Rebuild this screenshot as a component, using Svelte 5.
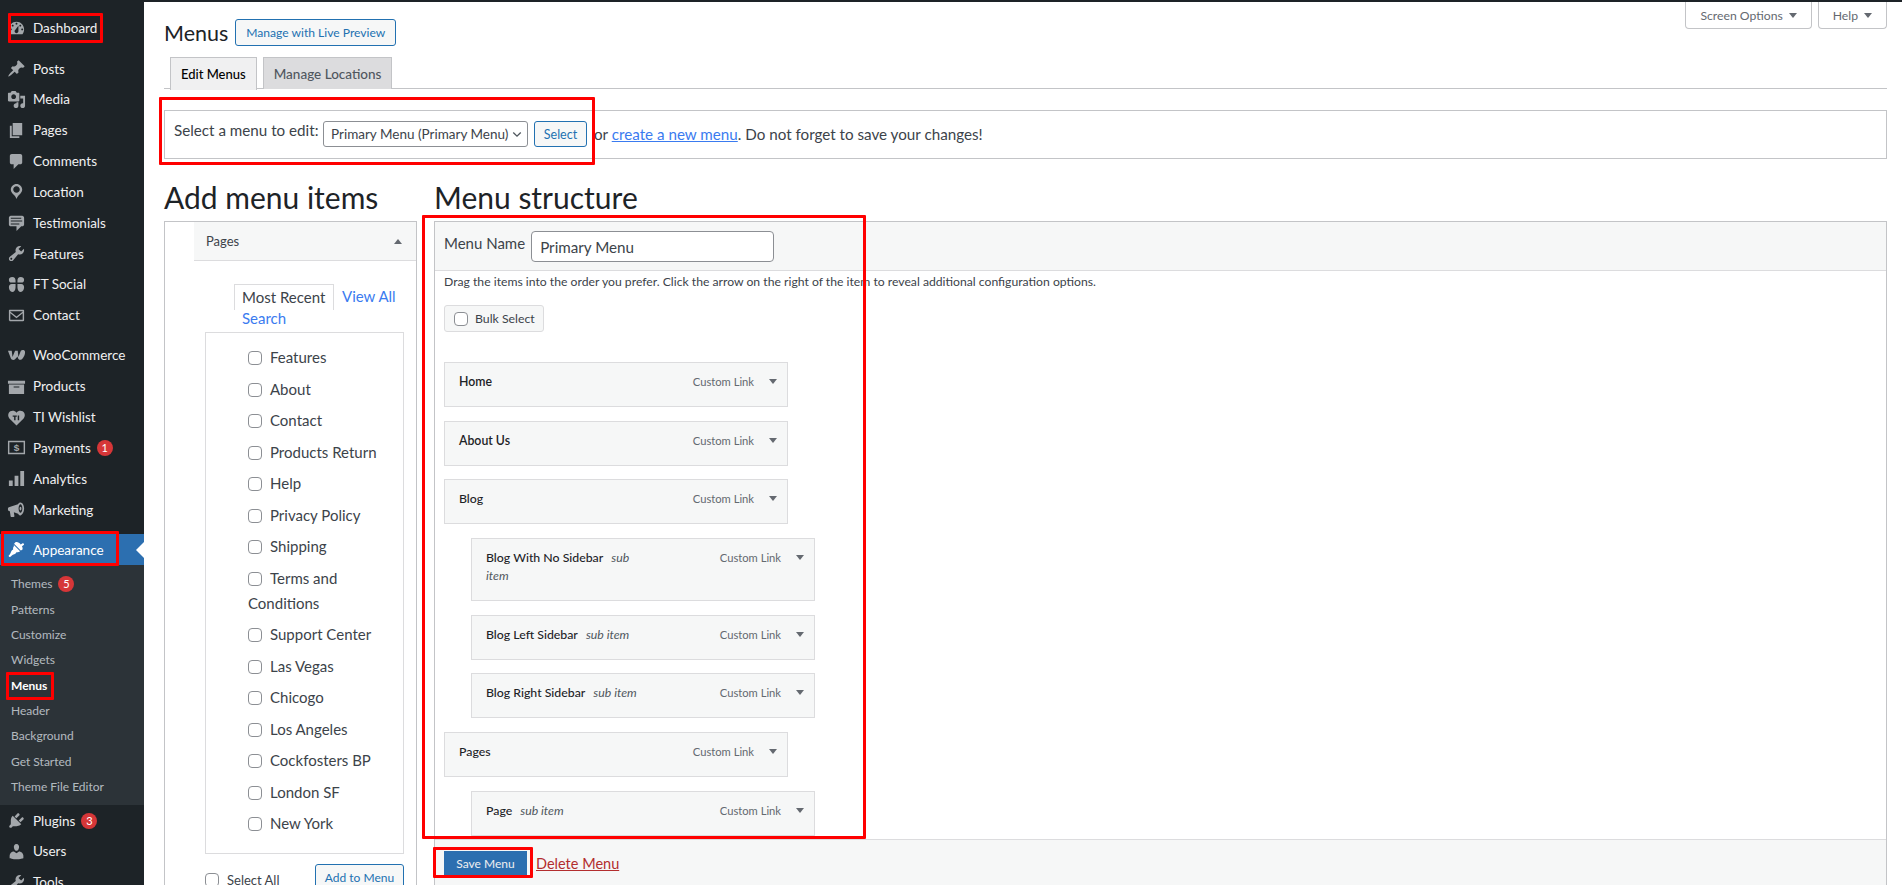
<script lang="ts">
  const icons: Record<string, string> = {
    dashboard: 'M3.76 16h12.48c1.1-1.37 1.76-3.11 1.76-5 0-4.42-3.58-8-8-8s-8 3.58-8 8c0 1.89.66 3.63 1.76 5zM10 4c.55 0 1 .45 1 1s-.45 1-1 1-1-.45-1-1 .45-1 1-1zM6 6c.55 0 1 .45 1 1s-.45 1-1 1-1-.45-1-1 .45-1 1-1zm8 0c.55 0 1 .45 1 1s-.45 1-1 1-1-.45-1-1 .45-1 1-1zm-5.37 5.55L12 7v6c0 1.1-.9 2-2 2s-2-.9-2-2c0-.57.24-1.08.63-1.45zM4 10c.55 0 1 .45 1 1s-.45 1-1 1-1-.45-1-1 .45-1 1-1zm12 0c.55 0 1 .45 1 1s-.45 1-1 1-1-.45-1-1 .45-1 1-1z',
    post: 'M10.44 3.02l1.82-1.82 6.36 6.35-1.83 1.82c-1.05-.68-2.48-.57-3.41.36l-.75.75c-.92.93-1.04 2.35-.35 3.41l-1.83 1.82-2.41-2.41-2.8 2.79c-.42.42-3.38 2.71-3.8 2.29s1.86-3.39 2.28-3.81l2.79-2.79L4.1 9.36l1.83-1.82c1.05.69 2.48.57 3.4-.36l.75-.75c.93-.92 1.05-2.35.36-3.41z',
    media: 'M13 11V4c0-.55-.45-1-1-1h-1.67L9 1H5L3.67 3H2c-.55 0-1 .45-1 1v7c0 .55.45 1 1 1h10c.55 0 1-.45 1-1zM7 4.5c1.38 0 2.5 1.12 2.5 2.5S8.38 9.5 7 9.5 4.5 8.38 4.5 7 5.62 4.5 7 4.5zM14 6h5v10.5c0 1.38-1.12 2.5-2.5 2.5S14 17.88 14 16.5s1.12-2.5 2.5-2.5c.17 0 .34.02.5.05V9h-3V6zm-4 8.05V13h2v3.5c0 1.38-1.12 2.5-2.5 2.5S7 17.88 7 16.5 8.12 14 9.5 14c.17 0 .34.02.5.05z',
    page: 'M6 15V2h10v13H6zm-1 1h8v2H3V5h2v11z',
    comments: 'M5 2h9c1.1 0 2 .9 2 2v7c0 1.1-.9 2-2 2h-2l-5 5v-5H5c-1.1 0-2-.9-2-2V4c0-1.1.9-2 2-2z',
    location: 'M10 2c-3.31 0-6 2.69-6 6 0 2.02 1.17 3.71 2.53 4.89.43.37 1.18.96 1.85 1.83.74.97 1.2 2.05 1.62 3.28.42-1.23.88-2.31 1.62-3.28.67-.87 1.42-1.46 1.85-1.83C14.830 11.71 16 10.02 16 8c0-3.31-2.69-6-6-6zm0 2.56c1.9 0 3.44 1.54 3.44 3.44S11.9 11.44 10 11.44 6.56 9.9 6.56 8 8.1 4.56 10 4.56z',
    testimonial: 'M4 3h12c.55 0 1.02.2 1.41.59S18 4.45 18 5v7c0 .55-.2 1.02-.59 1.41S16.55 14 16 14h-1l-5 5v-5H4c-.55 0-1.02-.2-1.41-.59S2 12.55 2 12V5c0-.55.2-1.02.59-1.41S3.45 3 4 3zm11 2H4v1h11V5zm1 3H4v1h12V8zm-3 3H4v1h9v-1z',
    tools: 'M16.68 9.77c-1.34 1.34-3.3 1.67-4.95.99l-5.41 6.52c-.99.99-2.59.99-3.58 0s-.99-2.59 0-3.57l6.52-5.42c-.68-1.65-.35-3.61.99-4.95 1.28-1.28 3.12-1.62 4.72-1.06l-2.89 2.89 2.82 2.82 2.86-2.87c.53 1.58.18 3.39-1.08 4.65zM3.81 16.21c.4.39 1.04.39 1.43 0 .4-.4.4-1.04 0-1.43-.39-.4-1.03-.4-1.43 0-.39.39-.39 1.03 0 1.43z',
    social: 'M2 5c0-2 1.500-3 3.500-3 2.500 0 3.500 1.500 3.500 4v2H5C3 8 2 7 2 5zM18 5c0-2-1.500-3-3.500-3C12 2 11 3.500 11 6v2h4c2 0 3-1 3-3zM2 13c0-2 1-3.500 3-3.500h4V13c0 3-1.500 5-3.500 5S2 15.500 2 13zM18 13c0-2-1-3.500-3-3.500h-4V13c0 3 1.500 5 3.500 5s3.500-2.500 3.500-5z',
    email: 'M3 4h14c.55 0 1 .45 1 1v10c0 .55-.45 1-1 1H3c-.55 0-1-.45-1-1V5c0-.55.45-1 1-1zm.6 2l6.400 5 6.400-5v-.4H3.600V6zm-.1 1.700v6.700h13V7.700L10 12.800 3.500 7.700z',
    woo: 'M1 5h4l.800 6.500L8.500 5h2.800l.700 6.500L14.600 5c1-1 4.400-1.200 4.400 1.500 0 3-2.400 8-5 8-1.600 0-2.500-1-2.900-3.500L8.500 14c-.9 1-3.700 1.300-4.500-1L1 5z',
    archive: 'M19 4v3H1V4h18zM2 8h16v10H2V8zm5 2v1h6v-1H7z',
    wishlist: 'M10 18.500 2.500 11C1 9.300 1 6.800 1.800 5.300 3.300 2.400 7.800 2 10 5c2.200-3 6.700-2.600 8.200.3.800 1.500.8 4-.7 5.700L10 18.500zM6 8v1.300h1.500V13H9V9.300h1.300V8H6zm5.300 0v5h1.500V8h-1.500z',
    payments: 'M1 3h18v14H1V3zm1.500 1.500v11h15v-11h-15z',
    analytics: 'M18 18V2h-4v16h4zm-6 0V7H8v11h4zm-6 0v-6H2v6h4z',
    marketing: 'M18 9c0-3.500-1.700-6.500-3.800-6.500-1 0-2 .7-2.700 1.900L2 7.500c-.7.2-1 .7-1 1.300v1.400c0 .6.4 1.100 1 1.300l1 .3.800 5.200c.1.600.5 1 1.100 1h2c.6 0 1-.5.900-1.100l-.6-3.900 4.400 1.400c.7 1.200 1.600 1.900 2.600 1.900C16.300 15.500 18 12.500 18 9zm-3.800 4.500c-.9 0-2-1.800-2-4.500s1.100-4.500 2-4.500 2 1.800 2 4.500-1.100 4.500-2 4.500zm0-6.500c-.6 0-1 .9-1 2s.4 2 1 2 1-.9 1-2-.4-2-1-2z',
    appearance: 'M14.480 11.060L7.410 3.990l1.500-1.500c.5-.56 2.300-.47 3.590.32 1.210.74 1.760 1.600 1.900 1.800l2.100-1.200c.4-.25 1.100.15 1.300.55.250.4.150 1-.25 1.300l-1.800 1.200c.5 1.100.9 2.300.6 3.400-.2.900-1.060 1.060-1.870 1.200zM6.700 4.700l7.070 7.070c-1.200 1.100-2.800 1.300-3.800 1.100-.4.900-1.200 1.700-2.300 2.200-1 .4-2.100.7-2.900 1.400-.6.5-1.200 1.300-1.900 1.400-.6.100-1.100-.3-1.200-.9 0-.6.700-1.200 1.200-1.800.7-.8 1-1.900 1.400-2.900.5-1.100 1.300-1.900 2.200-2.300-.2-1-.1-2.800 1.030-3.770z',
    plugins: 'M13.11 4.360L9.870 7.600 8 5.730l3.240-3.240c.35-.34 1.050-.2 1.560.32.52.51.66 1.210.31 1.550zm-8 1.770l.91-1.120 9.010 9.010-1.190.84c-.71.71-2.630 1.160-3.820 1.160H6.140L4.900 17.260c-.59.59-1.540.59-2.120 0-.59-.58-.59-1.530 0-2.120l1.240-1.240v-3.880c0-1.130.4-3.190 1.090-3.890zm7.260 3.970l3.240-3.240c.34-.35 1.040-.21 1.550.31.52.51.66 1.210.31 1.550l-3.240 3.250z',
    users: 'M10 9.250c-2.270 0-2.730-3.440-2.730-3.440C7 4.020 7.820 2 9.970 2c2.160 0 2.980 2.020 2.710 3.810 0 0-.41 3.440-2.680 3.440zm0 2.570L12.720 10c2.390 0 4.520 2.330 4.520 4.530v2.490s-3.650 1.130-7.240 1.130c-3.650 0-7.240-1.130-7.240-1.130v-2.490c0-2.250 1.940-4.480 4.470-4.480z'
  };

  const groupA = [
    { label: 'Posts', icon: 'post' },
    { label: 'Media', icon: 'media' },
    { label: 'Pages', icon: 'page' },
    { label: 'Comments', icon: 'comments' },
    { label: 'Location', icon: 'location' },
    { label: 'Testimonials', icon: 'testimonial' },
    { label: 'Features', icon: 'tools' },
    { label: 'FT Social', icon: 'social' },
    { label: 'Contact', icon: 'email' }
  ];
  const groupB = [
    { label: 'WooCommerce', icon: 'woo' },
    { label: 'Products', icon: 'archive' },
    { label: 'TI Wishlist', icon: 'wishlist' },
    { label: 'Payments', icon: 'payments', badge: 1 },
    { label: 'Analytics', icon: 'analytics' },
    { label: 'Marketing', icon: 'marketing' }
  ];
  const subNav = [
    { label: 'Themes', badge: 5 },
    { label: 'Patterns' },
    { label: 'Customize' },
    { label: 'Widgets' },
    { label: 'Menus', current: true },
    { label: 'Header' },
    { label: 'Background' },
    { label: 'Get Started' },
    { label: 'Theme File Editor' }
  ];
  const groupC = [
    { label: 'Plugins', icon: 'plugins', badge: 3 },
    { label: 'Users', icon: 'users' },
    { label: 'Tools', icon: 'tools' }
  ];

  const pages = [
    'Features', 'About', 'Contact', 'Products Return', 'Help', 'Privacy Policy', 'Shipping',
    'Terms and Conditions', 'Support Center', 'Las Vegas', 'Chicogo', 'Los Angeles',
    'Cockfosters BP', 'London SF', 'New York'
  ];

  const menuItems = [
    { title: 'Home', strong: true },
    { title: 'About Us', strong: true },
    { title: 'Blog' },
    { title: 'Blog With No Sidebar', sub: true, tall: true },
    { title: 'Blog Left Sidebar', sub: true },
    { title: 'Blog Right Sidebar', sub: true },
    { title: 'Pages' },
    { title: 'Page', sub: true }
  ];
</script>

{#snippet navItem(item)}
  <li class="nav-item">
    <svg class="nav-icon" viewBox="0 0 20 20" fill="currentColor" fill-rule="evenodd" aria-hidden="true">
      <path d={icons[item.icon]} />
      {#if item.icon === 'payments'}
        <text x="10" y="14" text-anchor="middle" font-size="10.5" font-weight="700" font-family="Liberation Sans, sans-serif">$</text>
      {/if}
    </svg>
    <span>{item.label}</span>
    {#if item.badge}<b class="badge">{item.badge}</b>{/if}
  </li>
{/snippet}

<div class="shell">
  <nav class="sidebar">
    <ul class="nav-list">
      {@render navItem({ label: 'Dashboard', icon: 'dashboard' })}
    </ul>
    <ul class="nav-list gap-a">
      {#each groupA as item}
        {@render navItem(item)}
      {/each}
    </ul>
    <ul class="nav-list gap-b">
      {#each groupB as item}
        {@render navItem(item)}
      {/each}
    </ul>
    <ul class="nav-list gap-c">
      <li class="nav-item active">
        <svg class="nav-icon" viewBox="0 0 20 20" fill="currentColor" fill-rule="evenodd" aria-hidden="true">
          <path d={icons.appearance} />
        </svg>
        <span>Appearance</span>
      </li>
    </ul>
    <ul class="sub-list">
      {#each subNav as sub}
        <li class:current={sub.current}>
          {sub.label}
          {#if sub.badge}<b class="badge">{sub.badge}</b>{/if}
        </li>
      {/each}
    </ul>
    <ul class="nav-list">
      {#each groupC as item}
        {@render navItem(item)}
      {/each}
    </ul>
  </nav>

  <main class="main">
    <header class="head">
      <div class="title-row">
        <h1>Menus</h1>
        <button class="btn">Manage with Live Preview</button>
      </div>
      <div class="meta-links">
        <button class="meta-link">Screen Options <i class="caret"></i></button>
        <button class="meta-link">Help <i class="caret"></i></button>
      </div>
    </header>

    <div class="tabs">
      <span class="tab active">Edit Menus</span>
      <span class="tab">Manage Locations</span>
    </div>

    <div class="manage-bar">
      <span class="manage-label">Select a menu to edit:</span>
      <div class="select-wrap">
        <select>
          <option>Primary Menu (Primary Menu)</option>
        </select>
        <svg class="chevron" viewBox="0 0 12 8" aria-hidden="true">
          <path d="M1.500 1.500 6 6l4.500-4.500" fill="none" stroke="currentColor" stroke-width="1.600" />
        </svg>
      </div>
      <button class="btn">Select</button>
      <span class="manage-hint">or <a href="#new" class="link">create a new menu</a>. Do not forget to save your changes!</span>
    </div>

    <div class="columns">
      <section class="col-left">
        <h2>Add menu items</h2>
        <div class="left-box">
          <div class="accordion-head">
            <span>Pages</span>
            <i class="caret up"></i>
          </div>
          <div class="accordion-body">
            <div class="pick-tabs">
              <span class="pick-tab">Most Recent</span>
              <a href="#all" class="link plain">View All</a>
              <a href="#search" class="link plain search">Search</a>
            </div>
            <ul class="page-list">
              {#each pages as page}
                <li><input type="checkbox" class="check" /><label for="">{page}</label></li>
              {/each}
            </ul>
            <div class="pick-foot">
              <label class="select-all" for=""><input type="checkbox" class="check" />Select All</label>
              <button class="btn add">Add to Menu</button>
            </div>
          </div>
        </div>
      </section>

      <section class="col-right">
        <h2>Menu structure</h2>
        <div class="right-box">
          <div class="name-bar">
            <span class="name-label">Menu Name</span>
            <input class="name-input" type="text" value="Primary Menu" />
          </div>
          <div class="structure">
            <p class="drag-hint">Drag the items into the order you prefer. Click the arrow on the right of the item to reveal additional configuration options.</p>
            <div class="bulk"><input type="checkbox" class="check" />Bulk Select</div>
            {#each menuItems as item}
              <div class="menu-item" class:nested={item.sub} class:tall={item.tall}>
                <div class="item-title" class:strong={item.strong}>
                  {item.title}{#if item.sub}<em>sub item</em>{/if}
                </div>
                <span class="item-type">Custom Link</span>
                <i class="caret"></i>
              </div>
            {/each}
          </div>
          <div class="save-bar">
            <button class="btn primary">Save Menu</button>
            <a href="#delete" class="delete">Delete Menu</a>
          </div>
        </div>
      </section>
    </div>
  </main>

  <!-- red annotation boxes drawn over the screenshot -->
  <div class="mark" style="left:8px;top:13px;width:95px;height:30px"></div>
  <div class="mark" style="left:1px;top:531px;width:118px;height:35px"></div>
  <div class="mark" style="left:6px;top:672px;width:48px;height:28px"></div>
  <div class="mark" style="left:159px;top:97px;width:436px;height:68px"></div>
  <div class="mark" style="left:422px;top:215px;width:444px;height:624px"></div>
  <div class="mark" style="left:433px;top:847px;width:100px;height:31px"></div>
</div>

<style>
  :global(body) {
    margin: 0;
    background: #fff;
    font-family: Lato, "Open Sans", sans-serif;
    color: #3c434a;
  }

  ul {
    list-style: none;
    margin: 0;
    padding: 0;
  }

  .shell {
    position: relative;
    display: flex;
    width: 1902px;
    height: 885px;
    overflow: hidden;
  }

  .sidebar {
    flex: none;
    width: 144px;
    padding-top: 13px;
    background: #1d2327;
    color: #f0f0f1;
    box-sizing: border-box;
  }

  .nav-list.gap-a {
    margin-top: 9.3px;
  }

  .nav-list.gap-b {
    margin-top: 9.3px;
  }

  .nav-list.gap-c {
    margin-top: 9.2px;
  }

  .nav-item {
    position: relative;
    display: flex;
    align-items: center;
    height: 30.85px;
    padding-left: 7px;
    font-size: 13.5px;
  }

  .nav-item.active {
    background: #2c6fb0;
    color: #fff;
  }

  .nav-item.active .nav-icon {
    color: #fff;
  }

  .nav-item.active::after {
    content: "";
    position: absolute;
    right: 0;
    top: 50%;
    margin-top: -8px;
    border: 8px solid transparent;
    border-right-color: #fff;
    border-left-width: 0;
  }

  .nav-icon {
    flex: none;
    width: 19px;
    height: 19px;
    margin-right: 7px;
    color: #a3a7ab;
  }

  .badge {
    display: inline-block;
    min-width: 16px;
    height: 16px;
    margin-left: 6px;
    border-radius: 50%;
    background: #d63638;
    color: #fff;
    font-size: 11px;
    font-weight: 400;
    line-height: 16px;
    text-align: center;
  }

  .sub-list {
    padding: 6.2px 0 6.2px;
    background: #2c3338;
    color: rgba(240, 246, 252, 0.7);
    font-size: 12px;
  }

  .sub-list li {
    display: flex;
    align-items: center;
    height: 25.3px;
    padding-left: 11px;
  }

  .sub-list li.current {
    color: #fff;
    font-weight: 700;
  }

  .main {
    flex: 1;
    min-width: 0;
    padding: 0 15px 0 20px;
    border-top: 2px solid #1d2327;
  }

  .head {
    display: flex;
    justify-content: space-between;
    height: 55px;
  }

  .title-row {
    display: flex;
    align-items: center;
    gap: 7px;
    height: 27px;
    margin-top: 17px;
  }

  h1 {
    margin: 0;
    font-size: 21.5px;
    font-weight: 400;
    color: #1d2327;
  }

  .btn {
    height: 27px;
    padding: 0 10px;
    border: 1px solid #2271b1;
    border-radius: 3px;
    background: #f6f7f7;
    color: #2271b1;
    font: inherit;
    font-size: 12.1px;
  }

  .btn.primary {
    width: 83px;
    height: 26px;
    padding: 0;
    border-radius: 0;
    border-color: #2c6fb0;
    background: #2c6fb0;
    color: #f0f0f1;
    font-size: 12px;
  }

  .meta-links {
    display: flex;
    gap: 6px;
    align-items: flex-start;
  }

  .meta-link {
    display: flex;
    align-items: center;
    justify-content: center;
    gap: 6px;
    height: 27px;
    padding: 0 14px;
    border: 1px solid #c3c4c7;
    border-top: 0;
    border-radius: 0 0 4px 4px;
    background: #fff;
    color: #646970;
    font: inherit;
    font-size: 12.2px;
  }

  .caret {
    display: inline-block;
    width: 0;
    height: 0;
    border: 4px solid transparent;
    border-top: 5px solid #646970;
    border-bottom: 0;
  }

  .caret.up {
    border-top: 0;
    border-bottom: 5px solid #646970;
  }

  .tabs {
    display: flex;
    gap: 6px;
    height: 31px;
    padding-left: 6px;
    border-bottom: 1px solid #c3c4c7;
  }

  .tab {
    display: flex;
    align-items: center;
    height: 31px;
    padding: 0 10px;
    border: 1px solid #c3c4c7;
    border-bottom: 0;
    background: #dcdcde;
    color: #50575e;
    font-size: 13.5px;
    font-weight: 500;
  }

  .tab.active {
    height: 32px;
    background: #f0f0f1;
    color: #000;
    font-size: 13px;
  }

  .manage-bar {
    display: flex;
    align-items: flex-start;
    box-sizing: border-box;
    height: 49px;
    margin-top: 21px;
    padding: 10px 9px 0;
    border: 1px solid #c3c4c7;
    font-size: 15.2px;
  }

  .manage-label {
    width: 149px;
    flex: none;
    line-height: 18px;
  }

  .select-wrap {
    position: relative;
    height: 26px;
  }

  select {
    appearance: none;
    width: 205px;
    height: 26px;
    padding: 0 18px 0 7px;
    border: 1px solid #8c8f94;
    border-radius: 3px;
    background: #fff;
    color: #3c434a;
    font: inherit;
    font-size: 13.5px;
  }

  .chevron {
    position: absolute;
    right: 6px;
    top: 10px;
    width: 10px;
    height: 7px;
    color: #50575e;
    pointer-events: none;
  }

  .manage-bar .btn {
    width: 53px;
    height: 26px;
    margin-left: 6px;
    padding: 0;
    font-size: 12.5px;
  }

  .manage-hint {
    margin-left: 7px;
    line-height: 26px;
  }

  .link {
    color: #3a7bf0;
  }

  .link.plain {
    text-decoration: none;
  }

  .columns {
    display: flex;
    gap: 17px;
    margin-top: 17px;
  }

  h2 {
    height: 45px;
    margin: 0;
    font-size: 30px;
    font-weight: 400;
    line-height: 43px;
    color: #1d2327;
  }

  .col-left {
    flex: none;
    width: 253px;
  }

  .col-right {
    flex: 1;
    min-width: 0;
  }

  .left-box {
    box-sizing: border-box;
    height: 700px;
    padding-left: 29px;
    border: 1px solid #c3c4c7;
  }

  .accordion-head {
    display: flex;
    align-items: center;
    justify-content: space-between;
    height: 38px;
    padding: 0 14px 0 12px;
    border-bottom: 1px solid #dcdcde;
    background: #f6f7f7;
    font-size: 13px;
  }

  .accordion-body {
    padding: 23px 12px 0 11px;
    font-size: 15px;
  }

  .pick-tabs {
    display: flex;
    flex-wrap: wrap;
    align-items: flex-start;
    height: 48px;
    padding-left: 29px;
    box-sizing: border-box;
  }

  .pick-tab {
    box-sizing: border-box;
    width: 100px;
    height: 26px;
    padding: 3px 7px 0;
    border: 1px solid #dcdcde;
    border-bottom: 0;
  }

  .pick-tabs .plain {
    padding: 3px 0 0 8px;
  }

  .pick-tabs .search {
    flex-basis: 100%;
    padding: 0 0 0 8px;
    height: 22px;
    line-height: 16px;
  }

  .page-list {
    box-sizing: border-box;
    height: 522px;
    padding: 12px 12px 0 42px;
    border: 1px solid #dcdcde;
  }

  .page-list li {
    padding-bottom: 6.5px;
    line-height: 25px;
  }

  .check {
    appearance: none;
    box-sizing: border-box;
    width: 14px;
    height: 14px;
    margin: 0 8px 0 0;
    border: 1px solid #8c8f94;
    border-radius: 4px;
    background: #fff;
    vertical-align: -2px;
  }

  .pick-foot {
    display: flex;
    justify-content: space-between;
    margin-top: 10px;
  }

  .select-all {
    font-size: 13px;
    margin-top: 8px;
  }

  .btn.add {
    width: 89px;
    padding: 0;
    font-size: 12px;
  }

  .right-box {
    box-sizing: border-box;
    height: 700px;
    border: 1px solid #c3c4c7;
  }

  .name-bar {
    display: flex;
    align-items: flex-start;
    gap: 6px;
    height: 49px;
    padding: 9px 9px 0;
    box-sizing: border-box;
    border-bottom: 1px solid #dcdcde;
    background: #f6f7f7;
  }

  .name-label {
    font-size: 15px;
    line-height: 24px;
  }

  .name-input {
    box-sizing: border-box;
    width: 243px;
    height: 31px;
    padding: 0 8px;
    border: 1px solid #8c8f94;
    border-radius: 4px;
    color: #3c434a;
    font: inherit;
    font-size: 15.2px;
  }

  .structure {
    box-sizing: border-box;
    height: 568px;
    padding: 0 9px;
    overflow: hidden;
  }

  .drag-hint {
    margin: 0;
    padding-top: 3px;
    font-size: 12.2px;
    line-height: 16px;
  }

  .bulk {
    display: flex;
    align-items: center;
    box-sizing: border-box;
    width: 100px;
    height: 27px;
    margin: 15px 0 30px;
    padding-left: 9px;
    border: 1px solid #dcdcde;
    border-radius: 3px;
    background: #f6f7f7;
    font-size: 12.3px;
  }

  .bulk .check {
    margin-right: 7px;
  }

  .menu-item {
    position: relative;
    display: flex;
    align-items: flex-start;
    justify-content: space-between;
    box-sizing: border-box;
    width: 344px;
    height: 45px;
    margin-bottom: 13.7px;
    padding: 10px 10px 0 14px;
    border: 1px solid #dcdcde;
    background: #f6f7f7;
    font-size: 12.3px;
    line-height: 18px;
  }

  .menu-item.nested {
    margin-left: 27px;
  }

  .menu-item.tall {
    height: 63px;
  }

  .item-title {
    width: 162px;
    color: #1d2327;
    font-weight: 500;
  }

  .item-title.strong {
    font-weight: 600;
  }

  .item-title em {
    margin-left: 8px;
    color: #50575e;
    font-weight: 400;
  }

  .item-type {
    margin-left: auto;
    margin-right: 15px;
    color: #646970;
    font-size: 11.2px;
  }

  .menu-item .caret {
    margin-top: 6px;
  }

  .save-bar {
    display: flex;
    align-items: center;
    gap: 9px;
    height: 47px;
    padding: 0 9px;
    border-top: 1px solid #dcdcde;
    background: #f6f7f7;
  }

  .delete {
    color: #b32d2e;
    font-size: 14.5px;
  }

  .mark {
    position: absolute;
    box-sizing: border-box;
    border: 3px solid #f00;
    border-radius: 1px;
    pointer-events: none;
  }
</style>
